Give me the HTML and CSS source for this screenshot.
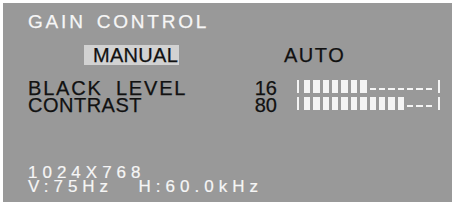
FILE: index.html
```html
<!DOCTYPE html>
<html>
<head>
<meta charset="utf-8">
<link rel="stylesheet" href="styles.css">
</head>
<body>
<div class="osd">
  <div class="title">GAIN CONTROL</div>
  <div class="modes">
    <span class="mode mode-active">MANUAL</span>
    <span class="mode mode-auto">AUTO</span>
  </div>
  <div class="settings">
    <div class="row">
      <span class="label label-black">BLACK LEVEL</span>
      <span class="value">16</span>
      <div class="bar">
        <span class="cap"></span>
        <div class="segs">
          <i class="on"></i><i class="on"></i><i class="on"></i><i class="on"></i><i class="on"></i><i class="on"></i><i class="on"></i><i></i><i></i><i></i><i></i><i></i><i></i><i></i>
        </div>
        <span class="cap cap-end"></span>
      </div>
    </div>
    <div class="row">
      <span class="label label-contrast">CONTRAST</span>
      <span class="value">80</span>
      <div class="bar">
        <span class="cap"></span>
        <div class="segs">
          <i class="on"></i><i class="on"></i><i class="on"></i><i class="on"></i><i class="on"></i><i class="on"></i><i class="on"></i><i class="on"></i><i class="on"></i><i class="on"></i><i class="on"></i><i></i><i></i><i></i>
        </div>
        <span class="cap cap-end"></span>
      </div>
    </div>
  </div>
  <div class="info">
    <div class="info-line">1024X768</div>
    <div class="info-line">V:75Hz  H:60.0kHz</div>
  </div>
</div>
</body>
</html>
```

FILE: styles.css
```css
html, body {
  margin: 0;
  padding: 0;
  background: #ffffff;
}

body {
  width: 454px;
  height: 204px;
  overflow: hidden;
  font-family: "Liberation Sans", Arial, sans-serif;
}

.osd {
  margin: 3px 2px 2px 3px;
  height: 199px;
  background: #999999;
  box-sizing: border-box;
  padding: 9px 0 0 25px;
  display: flex;
  flex-direction: column;
}

.title {
  color: #f6f6f6;
  font-size: 19px;
  line-height: 20px;
  letter-spacing: 2.8px;
  word-spacing: 3px;
  white-space: pre;
  -webkit-text-stroke: 0.25px #f6f6f6;
}

.modes {
  margin-top: 13px;
  display: flex;
  align-items: flex-start;
  font-size: 20px;
  line-height: 20px;
  color: #111111;
  -webkit-text-stroke: 0.25px #111111;
}

.mode-active {
  margin-left: 56px;
  width: 95px;
  height: 20px;
  box-sizing: border-box;
  padding: 1px 0 0 9px;
  line-height: 19px;
  background: #d2d2d2;
  letter-spacing: 0.3px;
}

.mode-auto {
  margin-left: 105px;
  padding-top: 1px;
  line-height: 19px;
  letter-spacing: 1.5px;
}

.settings {
  margin-top: 15px;
  display: flex;
  flex-direction: column;
}

.row {
  display: flex;
  align-items: flex-start;
  height: 17px;
  font-size: 20px;
  line-height: 17px;
  color: #111111;
  -webkit-text-stroke: 0.25px #111111;
}

.label {
  width: 209px;
  white-space: pre;
}

.label-black {
  letter-spacing: 1.8px;
  word-spacing: 6px;
}

.label-contrast {
  letter-spacing: 0.5px;
}

.value {
  width: 40px;
  text-align: right;
}

.bar {
  margin-left: 20px;
  display: flex;
  align-items: flex-start;
}

.cap {
  width: 2px;
  height: 13px;
  background: #f4f4f4;
}

.segs {
  margin-left: 5px;
  width: 128px;
  height: 13px;
  display: flex;
  gap: 3px;
}

.segs i {
  flex: 1;
  height: 2px;
  margin-top: 8px;
  background: #f4f4f4;
}

.segs i.on {
  height: 13px;
  margin-top: 0;
}

.cap-end {
  margin-left: 6px;
}

.info {
  margin-top: 52px;
  color: #f6f6f6;
  font-size: 17px;
  line-height: 14px;
  letter-spacing: 5px;
  -webkit-text-stroke: 0.2px #f6f6f6;
}

.info-line {
  white-space: pre;
  word-spacing: 3px;
}
```
